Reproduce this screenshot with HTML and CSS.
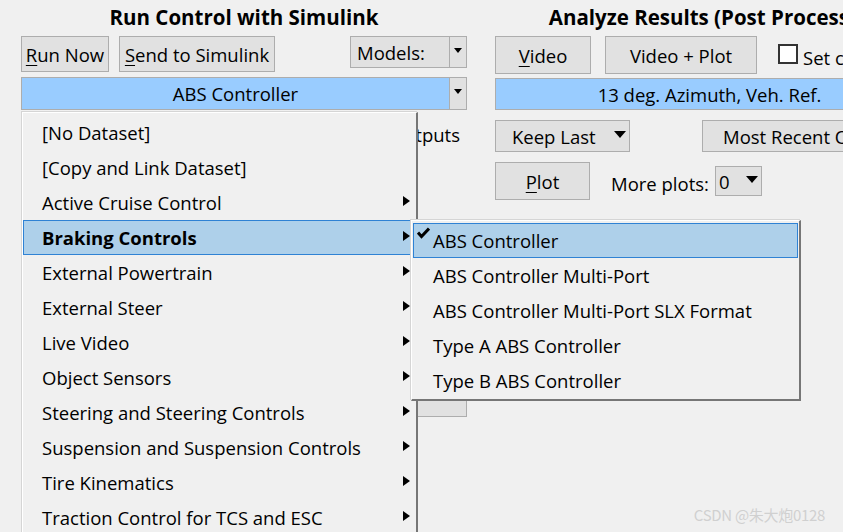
FILE: index.html
```html
<!DOCTYPE html>
<html>
<head>
<meta charset="utf-8">
<link rel="stylesheet" href="styles.css">
</head>
<body>
<div class="app">
  <section class="col col-left">
    <h2 class="title">Run Control with Simulink</h2>
    <div class="row row-1">
      <button class="btn btn-run"><u>R</u>un Now</button>
      <button class="btn btn-send"><u>S</u>end to Simulink</button>
      <div class="combo combo-models"><span class="combo-text">Models:</span><span class="combo-arrow sep"><i class="tri tri-s"></i></span></div>
    </div>
    <div class="bluebar bluebar-left"><span class="bluebar-text">ABS Controller</span><span class="combo-arrow sep grey"><i class="tri tri-s"></i></span></div>
    <div class="row row-outputs"><span class="label">Save all outputs</span></div>
    <div class="row row-hidden"><button class="btn btn-hidden"></button></div>
  </section>

  <section class="col col-right">
    <h2 class="title">Analyze Results (Post Processing)</h2>
    <div class="row row-1r">
      <button class="btn btn-video"><u>V</u>ideo</button>
      <button class="btn btn-vplot">Video + Plot</button>
      <span class="check"></span><span class="label set">Set colors</span>
    </div>
    <div class="bluebar bluebar-right"><span class="bluebar-text">13 deg. Azimuth, Veh. Ref.</span><span class="combo-arrow sep grey"><i class="tri tri-s"></i></span></div>
    <div class="row row-3r">
      <div class="combo combo-keep"><span class="combo-text">Keep Last</span><i class="tri tri-l"></i></div>
      <button class="btn btn-recent">Most Recent Overlay</button>
    </div>
    <div class="row row-4r">
      <button class="btn btn-plot"><u>P</u>lot</button>
      <span class="label more">More plots:</span>
      <div class="combo combo-zero"><span class="combo-text">0</span><i class="tri tri-l"></i></div>
    </div>
  </section>
</div>

<div class="menu menu-main">
  <div class="mi">[No Dataset]</div>
  <div class="mi">[Copy and Link Dataset]</div>
  <div class="mi sub">Active Cruise Control</div>
  <div class="mi sub active">Braking Controls</div>
  <div class="mi sub">External Powertrain</div>
  <div class="mi sub">External Steer</div>
  <div class="mi sub">Live Video</div>
  <div class="mi sub">Object Sensors</div>
  <div class="mi sub">Steering and Steering Controls</div>
  <div class="mi sub">Suspension and Suspension Controls</div>
  <div class="mi sub">Tire Kinematics</div>
  <div class="mi sub">Traction Control for TCS and ESC</div>
</div>

<div class="menu menu-sub">
  <div class="mi checked hl"><svg class="checkmark" viewBox="0 0 13 12" width="13" height="12"><polyline points="1,5.5 4.5,9.5 12,1.5" fill="none" stroke="#000" stroke-width="3"/></svg>ABS Controller</div>
  <div class="mi">ABS Controller Multi-Port</div>
  <div class="mi">ABS Controller Multi-Port SLX Format</div>
  <div class="mi">Type A ABS Controller</div>
  <div class="mi">Type B ABS Controller</div>
</div>

<div class="watermark">CSDN @朱大炮0128</div>
</body>
</html>
```

FILE: styles.css
```css
* { box-sizing: border-box; }
html, body {
  margin: 0;
  padding: 0;
  width: 843px;
  height: 532px;
  overflow: hidden;
  background: #f0f0f0;
  font-family: "Open Sans", "Noto Sans", sans-serif;
  font-size: 18.5px;
  color: #000;
}
.app {
  display: flex;
  gap: 28px;
  padding-left: 21px;
  width: 1000px;
}
.col {
  width: 446px;
  flex: none;
  display: flex;
  flex-direction: column;
}
.title {
  margin: 0;
  height: 36px;
  line-height: 35px;
  font-size: 20.5px;
  font-weight: 700;
  text-align: center;
  white-space: nowrap;
}
.row {
  display: flex;
  align-items: flex-start;
}
.btn {
  font: inherit;
  color: #000;
  background: #e1e1e1;
  border: 1px solid #adadad;
  padding: 0;
  margin: 0;
  white-space: nowrap;
}
.btn u { text-decoration-thickness: 1px; text-underline-offset: 3px; }
.btn-run { width: 88px; height: 36px; }
.btn-send { width: 156px; height: 36px; margin-left: 10px; }
.combo {
  display: flex;
  align-items: center;
  background: #e1e1e1;
  border: 1px solid #adadad;
  position: relative;
}
.combo-models { width: 117px; height: 32px; margin-left: auto; }
.combo-models .combo-text { flex: 1; padding-left: 6px; }
.combo-arrow {
  width: 17px;
  height: 100%;
  display: flex;
  align-items: center;
  justify-content: center;
}
.combo-arrow.sep { border-left: 1px solid #adadad; }
.combo-arrow.grey { background: #e1e1e1; }
.tri {
  display: block;
  width: 0;
  height: 0;
  border-style: solid;
  border-color: #000 transparent transparent transparent;
}
.tri-s { border-width: 5px 4.5px 0 4.5px; margin-top: -4px; }
.tri-l { border-width: 7px 6px 0 6px; }

.bluebar {
  display: flex;
  height: 33px;
  margin-top: 5px;
  border: 1px solid #adadad;
  background: #99ccff;
}
.bluebar-text {
  flex: 1;
  text-align: center;
  line-height: 32px;
  white-space: nowrap;
}
.bluebar-right { margin-top: 4px; height: 32px; }
.bluebar-right .bluebar-text { line-height: 31px; }

.label { white-space: nowrap; }
.row-outputs { margin-top: 9px; justify-content: flex-end; padding-right: 7px; height: 32px; line-height: 32px; }
.row-hidden { margin-top: 230px; justify-content: flex-end; }
.btn-hidden { width: 50px; height: 36px; }

.row-1r { height: 38px; align-items: flex-start; }
.btn-video { width: 96px; height: 38px; }
.btn-vplot { width: 152px; height: 38px; margin-left: 14px; }
.check {
  width: 20px; height: 20px;
  margin-left: 21px; margin-top: 8px;
  border: 2px solid #333;
  background: #fff;
  flex: none;
}
.set { margin-left: 5px; line-height: 38px; padding-top: 3px; }

.row-3r { margin-top: 10px; }
.combo-keep { width: 135px; height: 32px; padding-left: 16px; }
.combo-keep .combo-text { flex: 1; }
.combo-keep .tri { margin-right: 3px; margin-top: -3px; }
.btn-recent { height: 32px; margin-left: 72px; width: 220px; text-align: left; padding-left: 20px; }

.row-4r { margin-top: 10px; align-items: center; height: 38px; }
.btn-plot { width: 95px; height: 38px; }
.more { margin-left: 21px; margin-top: 4px; }
.combo-zero { width: 47px; height: 30px; margin-left: 6px; margin-top: 0; padding-left: 3px; }
.combo-zero .combo-text { flex: 1; }
.combo-zero .tri { margin-right: 3px; margin-top: -3px; }

/* Popup menus overlay the panel */
.menu {
  position: absolute;
  background: #f0f0f0;
  border-top: 1px solid #ffffff;
  border-left: 1px solid #ffffff;
  border-right: 2px solid #767676;
  border-bottom: 2px solid #767676;
  box-shadow: -1px -1px 0 #d5d5d5;
  padding: 2px 0;
}
.menu-main {
  left: 22px;
  top: 112px;
  width: 396px;
  height: 460px;
  padding-right: 4px;
}
.menu-sub {
  left: 411px;
  top: 220px;
  width: 390px;
  height: 181px;
  padding-left: 1px;
  padding-right: 1px;
}
.mi {
  position: relative;
  height: 35px;
  line-height: 35px;
  padding-left: 19px;
  white-space: nowrap;
}
.mi.sub::after {
  content: "";
  position: absolute;
  right: 2px;
  top: 11px;
  border-style: solid;
  border-width: 5px 0 5px 7px;
  border-color: transparent transparent transparent #000;
}
.mi.active {
  background: #aed0ea;
  border: 1px solid #2f82d4;
  padding-left: 18px;
  line-height: 33px;
  font-weight: 700;
}
.mi.active::after { right: 1px; top: 10px; }
.menu-sub .mi { padding-left: 20px; }
.menu-sub .mi.hl {
  background: #aed0ea;
  border: 1px solid #2f82d4;
  padding-left: 19px;
  line-height: 33px;
}
.checkmark {
  position: absolute;
  left: 3px;
  top: 3px;
}
.watermark {
  position: absolute;
  right: 18px;
  bottom: 7px;
  font-family: "Noto Sans CJK SC", "Noto Sans", sans-serif;
  font-size: 15px;
  color: #d0d0d0;
  letter-spacing: -0.3px;
}
```
